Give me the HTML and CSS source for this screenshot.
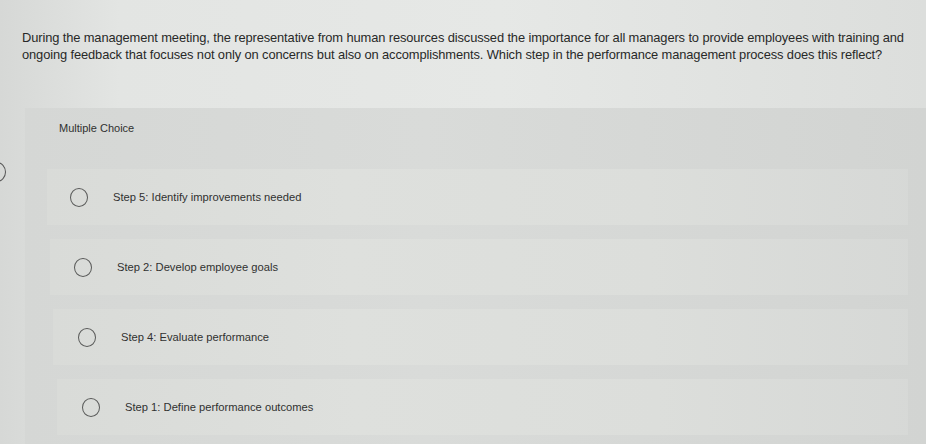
FILE: index.html
```html
<!DOCTYPE html>
<html>
<head>
<meta charset="utf-8">
<link rel="stylesheet" href="styles.css">
</head>
<body>
<div class="edge-arc"></div>
<p class="question">During the management meeting, the representative from human resources discussed the importance for all managers to provide employees with training and ongoing feedback that focuses not only on concerns but also on accomplishments. Which step in the performance management process does this reflect?</p>
<section class="panel">
  <div class="panel-title">Multiple Choice</div>
  <div class="options">
    <label class="option o1"><span class="radio"></span><span class="label">Step 5: Identify improvements needed</span></label>
    <label class="option o2"><span class="radio"></span><span class="label">Step 2: Develop employee goals</span></label>
    <label class="option o3"><span class="radio"></span><span class="label">Step 4: Evaluate performance</span></label>
    <label class="option o4"><span class="radio"></span><span class="label">Step 1: Define performance outcomes</span></label>
  </div>
</section>
</body>
</html>
```
FILE: styles.css
```css
html, body {
  margin: 0;
  height: 100%;
  overflow: hidden;
}
body {
  position: relative;
  font-family: "Liberation Sans", Arial, sans-serif;
  color: #2f302f;
  background: linear-gradient(to right, #d6d8d6 0px, #e3e5e3 120px, #e6e8e6 500px, #dcdedc 926px);
}
.edge-arc {
  position: absolute;
  left: -12px;
  top: 162px;
  width: 16px;
  height: 18px;
  border: 1.5px solid #555;
  border-radius: 50%;
}
.question {
  margin: 0;
  padding: 29px 8px 0 22px;
  font-size: 12.9px;
  line-height: 17px;
  letter-spacing: -0.12px;
  color: #282928;
}
.panel {
  margin: 45px 0 0 25px;
  height: 336px;
  background: linear-gradient(to right, #d5d7d5 0px, #d9dbd9 400px, #d2d4d2 901px);
}
.panel-title {
  padding: 14px 0 0 34px;
  height: 61px;
  box-sizing: border-box;
  font-size: 11px;
  line-height: 13px;
  color: #303130;
}
.options {
  display: flex;
  flex-direction: column;
  gap: 14px;
}
.option {
  display: flex;
  align-items: center;
  height: 56px;
  margin-right: 18px;
  background: linear-gradient(to right, #d9dbd8 0px, #dee0dd 300px, #dcdedb 600px, #d6d8d6 880px);
}
.o1 { margin-left: 22px; padding-left: 23px; }
.o2 { margin-left: 25px; padding-left: 24px; }
.o3 { margin-left: 28px; padding-left: 25px; }
.o4 { margin-left: 32px; padding-left: 25px; }
.radio {
  flex: none;
  width: 16px;
  height: 17px;
  border: 1.4px solid #595a59;
  border-radius: 50%;
}
.label {
  margin-left: 25px;
  margin-top: -1px;
  font-size: 11.2px;
  color: #303130;
}
```
